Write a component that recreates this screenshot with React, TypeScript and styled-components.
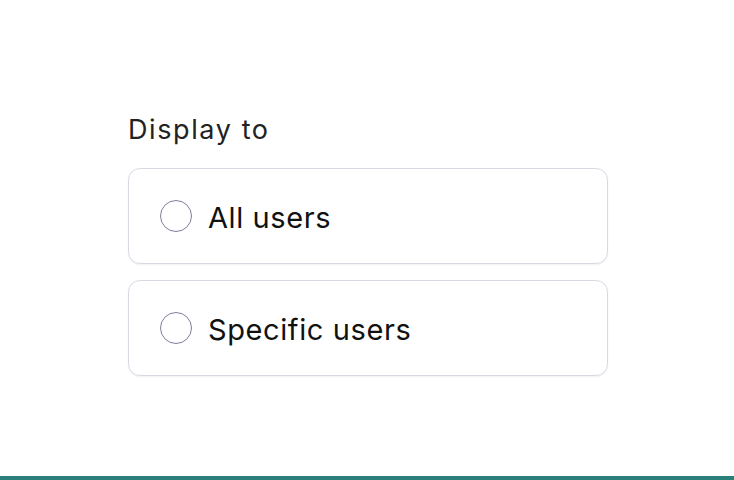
import React, { useState } from "react";
import styled, { createGlobalStyle } from "styled-components";

const GlobalStyle = createGlobalStyle`
  html, body {
    margin: 0;
    padding: 0;
    background: #ffffff;
  }
  body {
    font-family: Inter, "Noto Sans", "Liberation Sans", sans-serif;
  }
`;

const Page = styled.div`
  min-height: 100vh;
  display: flex;
  flex-direction: column;
  box-sizing: border-box;
`;

const Content = styled.div`
  flex: 1;
  display: flex;
  justify-content: center;
  padding: 110px 0 0 2px;
`;

const Field = styled.fieldset`
  width: 480px;
  margin: 0;
  padding: 0;
  border: none;
  display: flex;
  flex-direction: column;
  gap: 16px;
`;

const Legend = styled.legend`
  padding: 0;
  margin-bottom: 18px;
  font-size: 27px;
  line-height: 40px;
  letter-spacing: 1.6px;
  color: #222222;
`;

const Option = styled.label<{ selected: boolean }>`
  display: flex;
  align-items: center;
  gap: 16px;
  height: 96px;
  box-sizing: border-box;
  padding: 0 31px;
  border: 1px solid ${p => (p.selected ? "#2a7f78" : "#d9d9e3")};
  border-radius: 12px;
  background: #ffffff;
  box-shadow: 0 1px 2px rgba(40, 40, 80, 0.06);
  cursor: pointer;
`;

const Radio = styled.span<{ selected: boolean }>`
  width: 32px;
  height: 32px;
  box-sizing: border-box;
  border-radius: 50%;
  border: 1px solid #7e7e9e;
  flex-shrink: 0;
  display: flex;
  align-items: center;
  justify-content: center;
  &::after {
    content: "";
    width: 16px;
    height: 16px;
    border-radius: 50%;
    background: #2a7f78;
    display: ${p => (p.selected ? "block" : "none")};
  }
`;

const HiddenInput = styled.input`
  position: absolute;
  opacity: 0;
  pointer-events: none;
`;

const OptionText = styled.span`
  padding-top: 3px;
  font-size: 29px;
  line-height: 40px;
  letter-spacing: 0.6px;
  color: #111111;
`;

const BottomBar = styled.div`
  height: 4px;
  background: #2a7f78;
`;

const OPTIONS = ["All users", "Specific users"];

export default function App() {
  const [value, setValue] = useState<string | null>(null);

  return (
    <Page>
      <GlobalStyle />
      <Content>
        <Field>
          <Legend>Display to</Legend>
          {OPTIONS.map(opt => (
            <Option key={opt} selected={value === opt}>
              <HiddenInput
                type="radio"
                name="display-to"
                checked={value === opt}
                onChange={() => setValue(opt)}
              />
              <Radio selected={value === opt} />
              <OptionText>{opt}</OptionText>
            </Option>
          ))}
        </Field>
      </Content>
      <BottomBar />
    </Page>
  );
}
